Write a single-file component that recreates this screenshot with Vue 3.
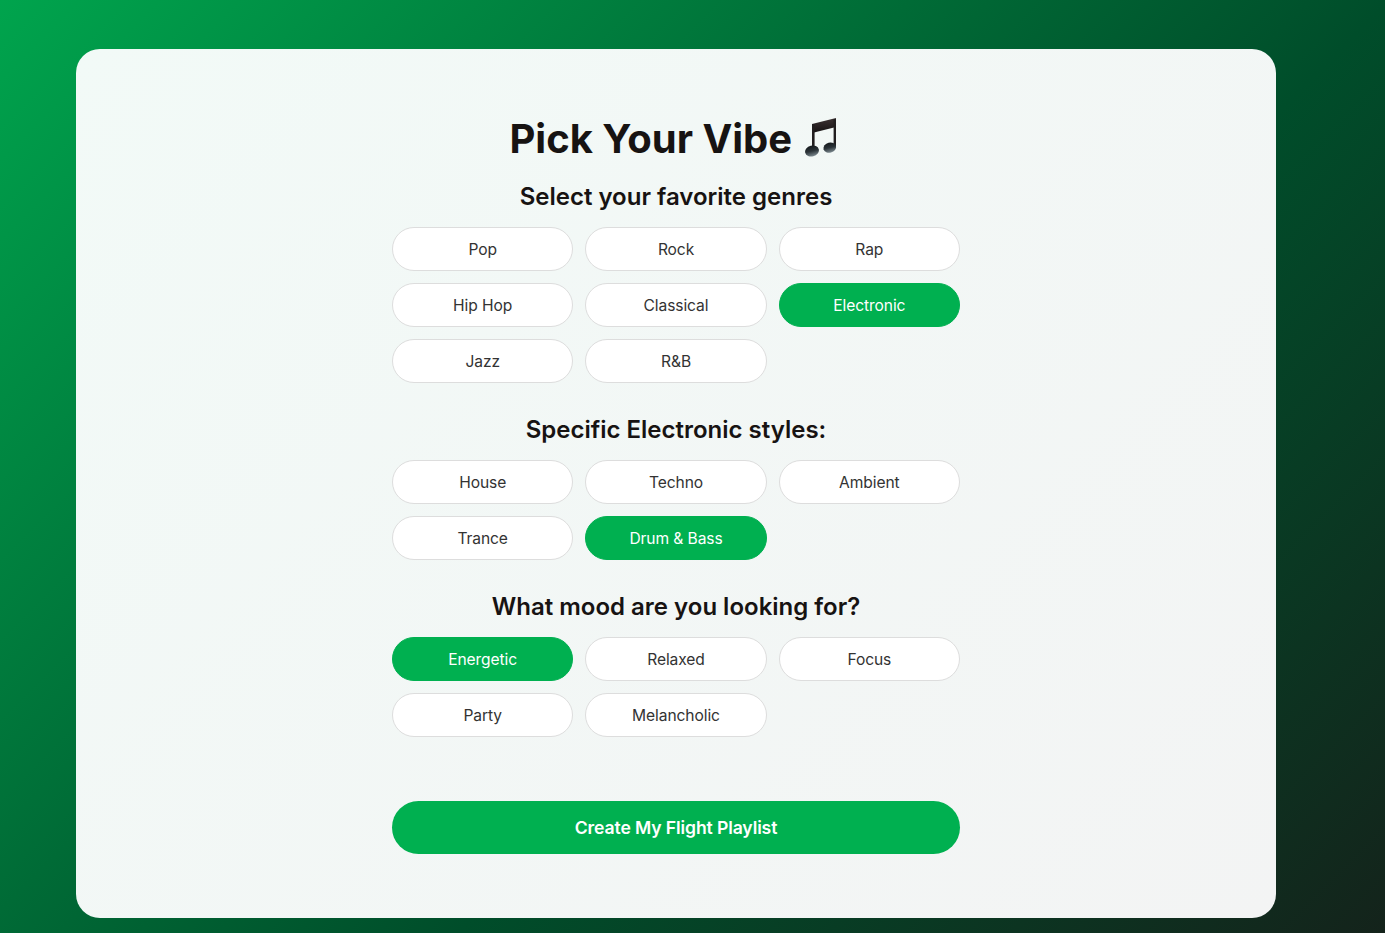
<script setup>
const sections = [
  { title: 'Select your favorite genres', options: ['Pop', 'Rock', 'Rap', 'Hip Hop', 'Classical', 'Electronic', 'Jazz', 'R&B'], selected: 'Electronic' },
  { title: 'Specific Electronic styles:', options: ['House', 'Techno', 'Ambient', 'Trance', 'Drum & Bass'], selected: 'Drum & Bass' },
  { title: 'What mood are you looking for?', options: ['Energetic', 'Relaxed', 'Focus', 'Party', 'Melancholic'], selected: 'Energetic' },
]
</script>

<template>
  <div class="page">
    <main class="card">
      <h1 class="title">
        Pick Your Vibe
        <svg class="note" viewBox="-3 0 41 39" width="41" height="39" aria-hidden="true">
          <defs>
            <linearGradient id="noteHead" x1="0" y1="0" x2="0" y2="1">
              <stop offset="0" stop-color="#15191c" />
              <stop offset="0.5" stop-color="#2b3338" />
              <stop offset="1" stop-color="#7d8a90" />
            </linearGradient>
            <linearGradient id="noteBar" x1="0" y1="0" x2="0" y2="1">
              <stop offset="0" stop-color="#3d3233" />
              <stop offset="1" stop-color="#151112" />
            </linearGradient>
          </defs>
          <path d="M7 6 31 0V9L7 15Z" fill="url(#noteBar)" />
          <path d="M7 6H9.6V33H7ZM28.6 1H31V29H28.6Z" fill="#221e1f" />
          <ellipse cx="7" cy="33" rx="7" ry="5.4" transform="rotate(-14 7 33)" fill="url(#noteHead)" />
          <ellipse cx="24.8" cy="29.6" rx="6.4" ry="5" transform="rotate(-14 24.8 29.6)" fill="url(#noteHead)" />
        </svg>
      </h1>
      <section v-for="section in sections" :key="section.title" class="section">
        <h2 class="heading">{{ section.title }}</h2>
        <div class="options">
          <button
            v-for="option in section.options"
            :key="option"
            type="button"
            class="option"
            :class="{ active: option === section.selected }"
          >{{ option }}</button>
        </div>
      </section>
      <button type="button" class="cta">Create My Flight Playlist</button>
    </main>
  </div>
</template>

<style scoped>
.page {
  box-sizing: border-box;
  height: 933px;
  overflow: hidden;
  padding: 49px 0 15px 76px;
  background: linear-gradient(135deg, #00a44d 0%, #004d2a 60%, #14231b 100%);
  font-family: Inter, "Liberation Sans", sans-serif;
}
.card {
  box-sizing: border-box;
  width: 1200px;
  height: 869px;
  padding: 64px 316px;
  border-radius: 24px;
  background: linear-gradient(135deg, #f2faf7 0%, #f3f4f4 100%);
  color: #171312;
  display: flex;
  flex-direction: column;
}
.title {
  margin: 0 0 19px;
  padding-top: 2px;
  font-size: 40px;
  line-height: 48px;
  font-weight: 700;
  text-align: center;
  white-space: nowrap;
}
.note {
  vertical-align: -4px;
}
.section + .section {
  margin-top: 32px;
}
.heading {
  margin: 0 0 16px;
  font-size: 24px;
  line-height: 29px;
  font-weight: 600;
  text-align: center;
}
.options {
  display: grid;
  grid-template-columns: repeat(3, 1fr);
  gap: 12px;
}
.option {
  height: 44px;
  padding: 0 12px;
  border: 1px solid #dddddd;
  border-radius: 22px;
  background: #ffffff;
  color: #333333;
  font: 400 15.6px Inter, "Liberation Sans", sans-serif;
  letter-spacing: -0.1px;
}
.option.active {
  border-color: #00b050;
  background: #00b050;
  color: #ffffff;
}
.cta {
  height: 53px;
  margin-top: 64px;
  border: none;
  border-radius: 26.5px;
  background: #00b050;
  color: #ffffff;
  font: 600 17.6px Inter, "Liberation Sans", sans-serif;
  letter-spacing: -0.12px;
}
</style>
